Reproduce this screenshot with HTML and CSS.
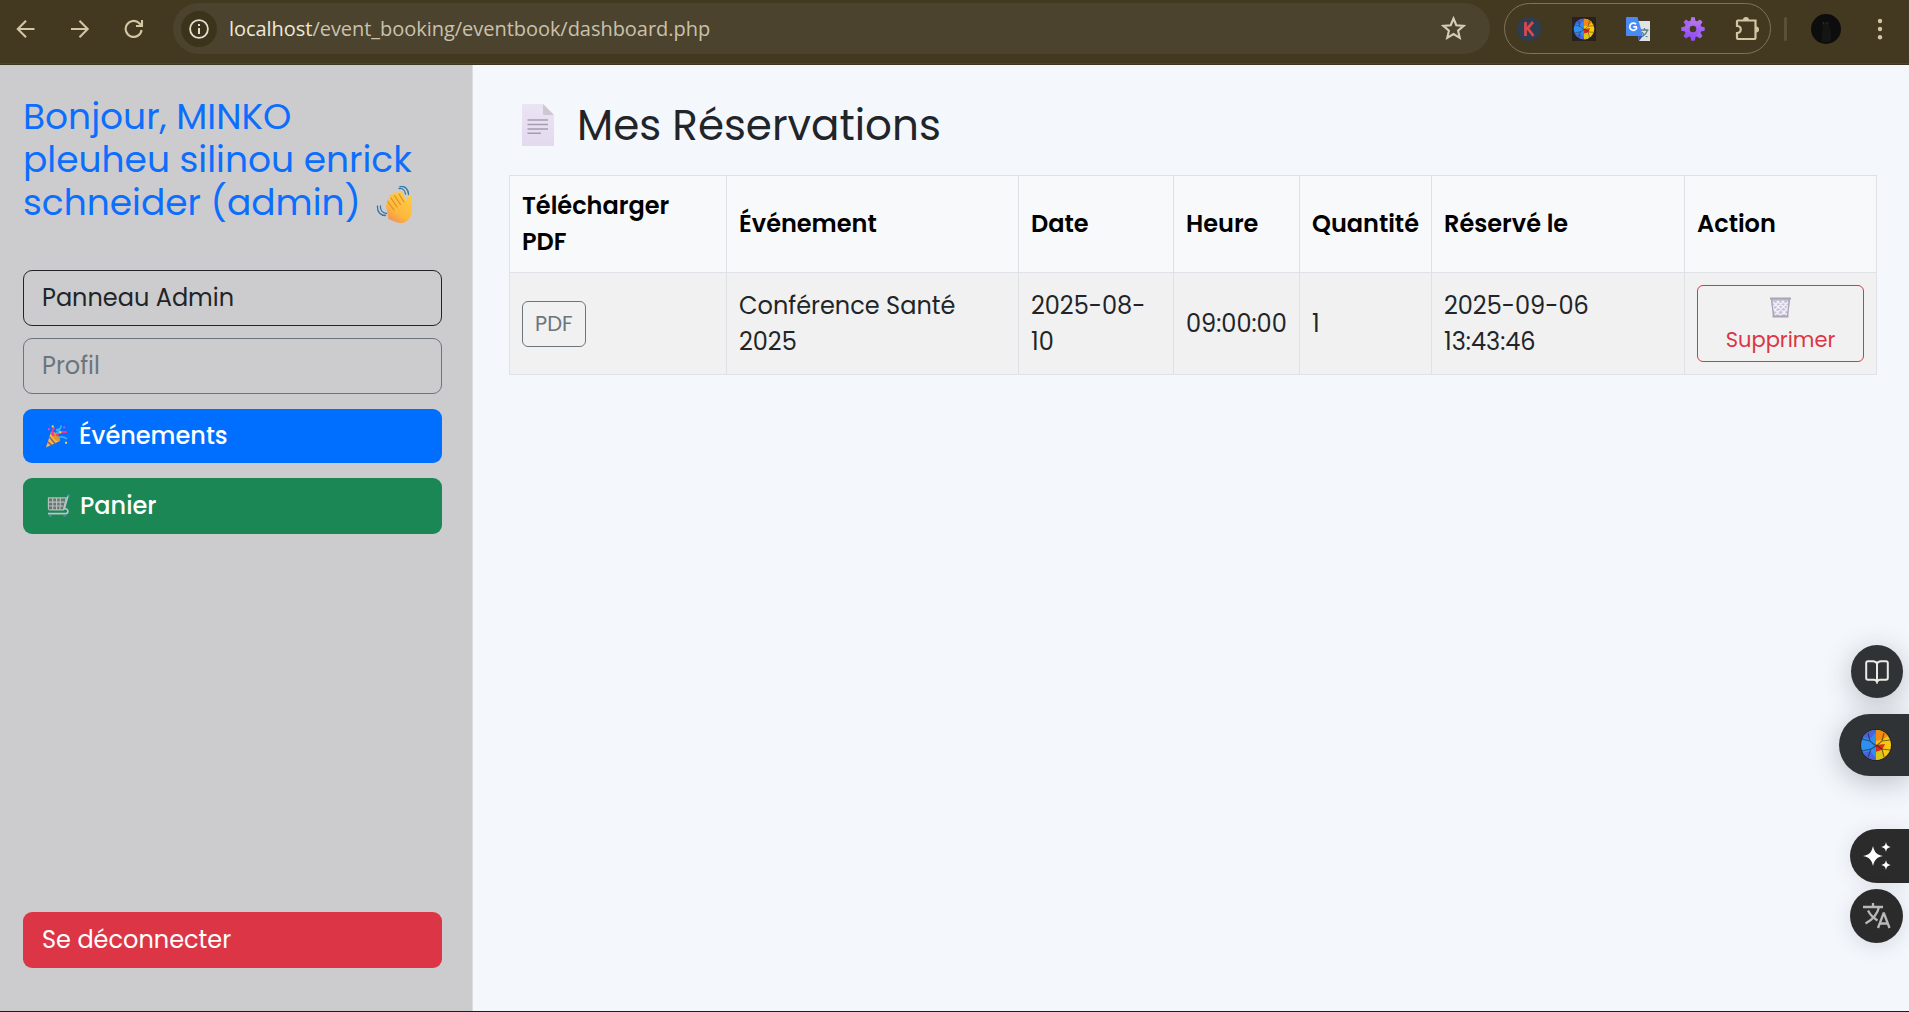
FILE: index.html
```html
<!DOCTYPE html>
<html lang="fr">
<head>
<meta charset="utf-8">
<title>Mes Réservations</title>
<link rel="stylesheet" href="styles.css">
</head>
<body>
<svg width="0" height="0" class="defs">
  <defs>
    <linearGradient id="handFill" x1="0.8" y1="0" x2="0.2" y2="1"><stop offset="0" stop-color="#ffcd45"/><stop offset="0.65" stop-color="#fdb83c"/><stop offset="1" stop-color="#f08a5a"/></linearGradient>
    <linearGradient id="docFill" x1="0" y1="0" x2="0" y2="1"><stop offset="0" stop-color="#ebe4f3"/><stop offset="1" stop-color="#e4d9ef"/></linearGradient>
    <linearGradient id="gearFill" x1="0" y1="0" x2="0" y2="1"><stop offset="0" stop-color="#b878f0"/><stop offset="1" stop-color="#8f4cf5"/></linearGradient>
    <symbol id="ball" viewBox="0 0 32 32">
      <circle cx="16" cy="16" r="16" fill="#2a2320"/>
      <path d="M16 1a15 15 0 0 0 0 30z" fill="#2f8ff0"/>
      <path d="M16 1a15 15 0 0 1 0 30z" fill="#f9c80e"/>
      <path d="M16 1C10 1 5 4 3 8l7 2 6-7zM16 31C10 31 6 28 3 24l7-2 6 7z" fill="#4a63dc"/>
      <path d="M16 1c6 0 10 3 12 6l-6 4-6 1z" fill="#f58a12"/>
      <path d="M16 16l9-1-3 6-6 2z" fill="#dd2a1b"/>
      <path d="M16 23l6-2 1 8c-2 1-5 2-7 2z" fill="#d9c51a"/>
      <path d="M2 10l8 2 6 5M2 22l9-2 5-3M8 4l2 8M8 28l3-8M30 11l-8 1-6 5M30 21l-8-1-6-4M24 4l-2 8M24 28l-2-8" stroke="#222" stroke-opacity=".6" stroke-width="1.100" fill="none"/>
    </symbol>
  </defs>
</svg>

<header class="toolbar">
  <svg class="nav-icon" viewBox="0 0 20 20"><path d="M18.500 10H2M10 1.800 1.800 10l8.200 8.200"/></svg>
  <svg class="nav-icon" viewBox="0 0 20 20"><path d="M1 10h16.500M9.500 1.800 17.700 10l-8.200 8.200"/></svg>
  <svg class="nav-icon" viewBox="0 0 20 20"><path d="M17.600 11a8 8 0 1 1-2.300-6.800l2.200 2.300M18 1v6h-6"/></svg>
  <div class="omnibox">
    <span class="site-info"><svg viewBox="0 0 20 20" width="20" height="20"><circle cx="10" cy="10" r="8.900" fill="none" stroke="#e6dfd0" stroke-width="1.800"/><path d="M9 9h2v6H9zM9 5h2v2H9z" fill="#e6dfd0"/></svg></span>
    <span class="url"><span class="host">localhost</span>/event_booking/eventbook/dashboard.php</span>
    <svg class="star" viewBox="0 0 24 24"><path d="m12 2.400 2.700 6.500 7 .6-5.300 4.600 1.600 6.900-6-3.700L6 21l1.600-6.900-5.300-4.600 7-.6z"/></svg>
  </div>
  <div class="extensions">
    <svg viewBox="0 0 24 24"><circle cx="12" cy="12" r="12" fill="#2c3e50"/><path d="M8.500 5v14M16 5l-6.500 7.500M10.500 11l6 8" fill="none" stroke="#d9484c" stroke-width="2.800"/></svg>
    <svg viewBox="0 0 24 24"><rect width="24" height="24" fill="#27221e"/><use href="#ball" x="1" y="1" width="22" height="22"/></svg>
    <svg viewBox="0 0 24 24"><path d="M10 4h14v20H13z" fill="#dfe3e6"/><path d="M14.500 13h8M18.500 11v2m3 0c-.8 3-2.800 5-5 6.500m-.500-4.500c1 2 3 4 5.500 5" fill="none" stroke="#607d8b" stroke-width="1.300"/><path d="M1 0h10.500l5.500 19H1a1 1 0 0 1-1-1V1a1 1 0 0 1 1-1z" fill="#4a8af4"/><path d="M12 19h5l-4 5z" fill="#3056b5"/><path d="M11 9.800H7.300M10 7.300a3.600 3.600 0 1 0 .900 3" fill="none" stroke="#fff" stroke-width="1.700"/></svg>
    <svg viewBox="0 0 24 24"><g fill="url(#gearFill)"><circle cx="12" cy="12" r="8.500"/><path d="M10.200.3h3.600l.9 5H9.300zM10.200 23.700h3.600l.9-5H9.300zM.3 10.200v3.600l5 .9V9.300zM23.700 10.200v3.600l-5 .9V9.300z"/><path d="M10.200.3h3.600l.9 5H9.300zM10.200 23.700h3.600l.9-5H9.300zM.3 10.200v3.600l5 .9V9.300zM23.700 10.200v3.600l-5 .9V9.300z" transform="rotate(45 12 12)"/></g><circle cx="12" cy="12" r="3.300" fill="#423920"/></svg>
    <svg viewBox="0 0 24 24"><path d="M2 3.500h18.500v17a1.500 1.500 0 0 1-1.500 1.500H3a1 1 0 0 1-1-1v-5c5 0 5-7 0-7V4.500a1 1 0 0 1 1-1z" fill="none" stroke="#d3c6a2" stroke-width="2.200"/><path d="M8 3a3 3 0 0 1 6 0zM21 9.500a3 3 0 0 1 0 6z" fill="#d3c6a2"/></svg>
  </div>
  <span class="divider"></span>
  <svg class="avatar" viewBox="0 0 30 30"><circle cx="15" cy="15" r="15" fill="#0d0d0e"/><path d="M11 10l1-3 3 2 3-2 0 5c2 4 3 9 1 16h-8c-1-6 0-10 1-14z" fill="#151516"/><circle cx="12.500" cy="9" r=".6" fill="#4a4a3c"/><circle cx="16" cy="9" r=".6" fill="#4a4a3c"/></svg>
  <svg class="menu" viewBox="0 0 6 24"><circle cx="3" cy="4" r="2.200"/><circle cx="3" cy="12" r="2.200"/><circle cx="3" cy="20.300" r="2.200"/></svg>
</header>

<div class="page">
  <aside class="sidebar">
    <h1 class="greeting">Bonjour, MINKO<br>pleuheu silinou enrick<br>schneider (admin)<svg class="wave" viewBox="0 0 38 38"><path d="M10 20 12.500 33 20 36c5 2 10 1 13-3s3.500-9 2.500-13l.5-9c0-3-4-3-4.500 0l-1 4-4-8c-1.500-3-5-2-4.500 1-2-3-5-1.500-4.500 1-2-2-5 0-4 2.500l.5 2c-2-1-4 1-3 3z" fill="url(#handFill)"/><path d="M15 12l6 9M18.500 9.500l6 9M23 8l5 8M12 16l6 8" stroke="#e08b25" stroke-width="1.100" fill="none" stroke-linecap="round"/><path d="M23 2.500c3.500-.5 6 2 6.500 5.500M24 .5c5-1 8.500 3 8.500 8M4.500 20c-.5 4 2 7 6 7.500M1.500 20c-.5 6 3 9.500 8 9.500" stroke="#2f77a8" stroke-width="1.300" fill="none" stroke-linecap="round"/></svg></h1>
    <nav class="side-nav">
      <a class="btn btn-outline-dark">Panneau Admin</a>
      <a class="btn btn-outline-secondary">Profil</a>
      <a class="btn btn-events"><svg class="btn-icon" viewBox="0 0 24 24"><path d="M5 8 0 24l15-7z" fill="#f6b73c"/><path d="M3.500 13l6 7M1.800 18l4 3.500M5 9l9 8" stroke="#8a6470" stroke-width="1.600"/><ellipse cx="10" cy="12.500" rx="2.700" ry="6.500" transform="rotate(-43 10 12.500)" fill="#e3952f"/><path d="M8 12C6 8 6 6 9 3M11 12c2-4 6-5 11-4" stroke="#f0359c" stroke-width="2.200" fill="none"/><path d="M10 9c5 0 5-5 2-4-3 1 2 4 4-4M13 14c3-2 6-1 9 1" stroke="#39aef0" stroke-width="1.700" fill="none"/><path d="M6 1h2v2H6zM20 18h2v2h-2zM14 7h2v2h-2z" fill="#ffd83b"/><path d="M2 4h2v2H2zM18 2h2v2h-2z" fill="#e94bb8"/></svg>Événements</a>
      <a class="btn btn-cart"><svg class="btn-icon" viewBox="0 0 24 24"><path d="M1 4h18l-3 12H3z" fill="#647a6d"/><path d="M1.500 3.500H20L17 16H3a1.500 1.500 0 0 1-1.500-1.500zM1.500 8H18M2 12h15M6 4v12M10 4v12M14 4l-.500 12" fill="none" stroke="#b9bcbf" stroke-width="1.200"/><path d="M22 1l-4 14c4-1 5 4 2 5H1" fill="none" stroke="#c3c0cc" stroke-width="1.700"/><path d="M21 0h3v2h-3zM2 21h3v2H2zM17 21h3v2h-3z" fill="#4a86d8"/></svg>Panier</a>
      <a class="btn btn-logout">Se déconnecter</a>
    </nav>
  </aside>

  <main class="content">
    <h2 class="title"><svg class="doc" viewBox="0 0 32 42"><path d="M0 0h21l11 11v31H0z" fill="url(#docFill)"/><path d="M21 0l11 11H22.500a1.500 1.500 0 0 1-1.500-1.500z" fill="#cdc6d4"/><path d="M5.500 16h20.500M5.500 20.500h20.500M5.500 25h20.500M5.500 29.300h13.500" stroke="#a69cb0" stroke-width="1.600"/></svg>Mes Réservations</h2>
    <table class="bookings">
      <colgroup><col class="c1"><col class="c2"><col class="c3"><col class="c4"><col class="c5"><col class="c6"><col class="c7"></colgroup>
      <thead>
        <tr>
          <th>Télécharger PDF</th>
          <th>Événement</th>
          <th>Date</th>
          <th>Heure</th>
          <th class="quantity">Quantité</th>
          <th>Réservé le</th>
          <th>Action</th>
        </tr>
      </thead>
      <tbody>
        <tr>
          <td><a class="btn-sm btn-pdf">PDF</a></td>
          <td>Conférence Santé<br>2025</td>
          <td>2025-08-<br>10</td>
          <td>09:00:00</td>
          <td>1</td>
          <td>2025-09-06<br>13:43:46</td>
          <td><a class="btn-sm btn-delete"><svg class="trash" viewBox="0 0 21 21"><path d="M1 2h19l-2 17H3z" fill="#c9c3d6"/><path d="M3 5l14 13M7 4l11 10M12 4l6 6M3 11l8 8M18 5 5 18M14 4 4 14M9 4 3 10M18 11l-7 7" stroke="#f4f1fa" stroke-width="1.300"/><path d="M0 1.500h21M2.500 19.500h16" stroke="#aaa4b8" stroke-width="2"/><path d="M1.500 2l2 17M19.500 2l-2 17" stroke="#a8a1bb" stroke-width="1.200"/></svg>Supprimer</a></td>
        </tr>
      </tbody>
    </table>
  </main>
</div>

<div class="float float-book"><svg width="24" height="24" viewBox="0 0 24 24"><path d="M12 3.500C11 1.500 10 1.300 8 1.300H3A1.800 1.800 0 0 0 1.200 3v15A1.800 1.800 0 0 0 3 19.800h6c1.500 0 2.500.7 3 2.200.500-1.500 1.500-2.200 3-2.200h6a1.800 1.800 0 0 0 1.800-1.800V3A1.800 1.800 0 0 0 21 1.300h-5c-2 0-3 .2-4 2.200zM12 3.500V22" fill="none" stroke="#eceae6" stroke-width="2"/></svg></div>
<div class="float float-ball"><svg width="34" height="34" viewBox="0 0 34 34"><use href="#ball" x="1" y="1" width="32" height="32"/></svg></div>
<div class="float float-sparkle"><svg width="28" height="28" viewBox="0 0 28 28"><path d="M10 4c1.500 6.500 3.500 8.500 10 10-6.500 1.500-8.500 3.500-10 10-1.500-6.500-3.500-8.500-10-10C6.500 12.500 8.500 10.500 10 4zM23 0c.8 3.500 1.500 4.200 5 5-3.500.8-4.200 1.500-5 5-.8-3.500-1.500-4.200-5-5 3.500-.8 4.200-1.500 5-5zM23 18c.8 3.500 1.500 4.200 5 5-3.500.8-4.200 1.500-5 5-.8-3.500-1.500-4.200-5-5 3.500-.8 4.200-1.500 5-5z" fill="#fff"/></svg></div>
<div class="float float-translate"><svg width="28" height="28" viewBox="0 0 28 28"><path d="M0 5h20M10 1v4M16 5C14.500 12 9 18 2.500 21.500M5 8.500c2 4 5.500 7.500 9.500 10M15 26l5.500-14.500h.5L26.500 26M17 21.500h8" fill="none" stroke="#b9b9b9" stroke-width="2.300"/></svg></div>
</body>
</html>
```
FILE: styles.css
```css
* { box-sizing: border-box; }

body {
  margin: 0;
  height: 1012px;
  display: flex;
  flex-direction: column;
  position: relative;
  overflow: hidden;
  font-family: "Poppins", "Inter", sans-serif;
  font-size: 24px;
  line-height: 36px;
  color: #212529;
  background: #f4f7fc;
}

svg { display: block; flex: none; }
.defs { position: absolute; }

/* Browser toolbar */
.toolbar {
  height: 65px;
  flex: none;
  display: flex;
  align-items: flex-start;
  padding: 3px 0 0 16px;
  background: linear-gradient(#423920 63px, #4e452f 63px 64px, #3f361e 64px);
}
.nav-icon { width: 20px; height: 20px; margin: 16px 34px 0 0; fill: none; stroke: #d3c6a2; stroke-width: 2.1; }
.nav-icon:nth-of-type(3) { margin-right: 29px; }
.omnibox {
  width: 1317px;
  height: 51px;
  display: flex;
  align-items: center;
  padding: 0 24px 0 8px;
  border-radius: 26px;
  background: #4b432e;
}
.site-info { width: 36px; height: 36px; border-radius: 50%; background: #3c331b; display: grid; place-items: center; }
.url { margin: 0 auto 0 12px; font: 20px/28px "Open Sans", "Noto Sans", sans-serif; letter-spacing: -.04px; color: #cac1ad; white-space: nowrap; }
.host { color: #efe8da; }
.star { width: 25px; height: 25px; fill: none; stroke: #d6cebb; stroke-width: 2; }
.extensions {
  width: 267px;
  height: 51px;
  display: flex;
  align-items: center;
  justify-content: space-between;
  margin-left: 14px;
  padding: 0 11px 0 12px;
  border: 1px solid #7d745f;
  border-radius: 26px;
}
.extensions svg { width: 24px; height: 24px; }
.divider { width: 3px; height: 24px; margin: 14px 0 0 13px; background: #5a5036; border-radius: 2px; }
.avatar { width: 30px; height: 30px; margin: 11px 0 0 24px; }
.menu { width: 6px; height: 24px; margin: 14px 0 0 36px; fill: #d3c6a2; }

/* Page frame */
.page { flex: 1; display: flex; border-bottom: 1px solid #1b1b1f; }
.sidebar {
  width: 473px;
  display: flex;
  flex-direction: column;
  padding: 30px 30px 43px 23px;
  background: #ccccce;
  border-right: 1px solid #dcdddf;
}
.greeting { margin: 0 0 45px; font-size: 36px; font-weight: 400; line-height: 43.2px; color: #0d6efd; white-space: nowrap; }
.wave { display: inline-block; width: 38px; height: 38px; margin: -4px 0 -4px 15px; vertical-align: -5px; }

.side-nav { flex: 1; display: flex; flex-direction: column; }
.btn {
  display: flex;
  align-items: center;
  height: 56px;
  width: 419px;
  padding: 0 18px;
  border: 1px solid transparent;
  border-radius: 9px;
}
.btn-outline-dark { border-color: #212529; margin-bottom: 12px; }
.btn-outline-secondary { border-color: #6c757d; color: #6c757d; margin-bottom: 15px; }
.btn-events, .btn-cart, .btn-logout { color: #fff; }
.btn-events, .btn-cart { font-weight: 500; }
.btn-events { height: 54px; margin-bottom: 15px; background: #006fff; padding-left: 22px; }
.btn-cart { background: #1a8754; padding-left: 23px; }
.btn-logout { margin-top: auto; background: #dc3646; }
.btn-icon { width: 23px; height: 24px; margin-right: 10px; }

/* Reservations */
.content { flex: 1; padding: 36px 32px 0 36px; }
.title { display: flex; align-items: flex-start; height: 74px; margin: 0; padding-left: 13px; font-size: 42px; font-weight: 400; line-height: 50px; }
.doc { width: 32px; height: 42px; margin: 3px 23px 0 0; }

.bookings { width: 1368px; table-layout: fixed; border-collapse: collapse; }
.bookings th, .bookings td { padding: 0 12px; border: 1px solid #dee2e6; text-align: left; vertical-align: middle; }
.bookings th { height: 97px; font-weight: 600; color: #000; background: #f8f9fb; }
.bookings td { height: 102px; background: #f1f1f1; }
.bookings .quantity { padding-right: 0; }
.c1 { width: 217px; }
.c2 { width: 292px; }
.c3 { width: 155px; }
.c4 { width: 126px; }
.c5 { width: 132px; }
.c6 { width: 253px; }
.c7 { width: 192px; }

.btn-sm { border: 1px solid; border-radius: 6px; font-size: 21px; line-height: 32px; }
.btn-pdf { display: flex; align-items: center; width: 64px; height: 46px; padding: 0 12px; color: #6c757d; }
.btn-delete { display: flex; flex-direction: column; align-items: center; gap: 6px; width: 167px; height: 77px; padding-top: 11px; color: #dc3545; }
.trash { width: 21px; height: 21px; }

/* Floating tools that overlay the page */
.float { position: absolute; display: flex; align-items: center; background: #2f3335; box-shadow: 0 6px 28px rgba(60, 65, 75, .3); }
.float-book { left: 1851px; top: 645px; width: 52px; height: 53px; padding-left: 14px; border-radius: 50%; }
.float-ball { left: 1839px; top: 714px; width: 70px; height: 62px; padding-left: 20px; border-radius: 31px 0 0 31px; }
.float-sparkle { left: 1850px; top: 829px; width: 59px; height: 54px; padding-left: 13px; border-radius: 27px 0 0 27px; background: #2b2b2b; box-shadow: 0 2px 20px rgba(60, 70, 90, .12); }
.float-translate { left: 1850px; top: 889px; width: 53px; height: 54px; padding-left: 13px; border-radius: 50%; background: #2b2b2b; box-shadow: 0 4px 20px rgba(60, 70, 90, .15); }
```
